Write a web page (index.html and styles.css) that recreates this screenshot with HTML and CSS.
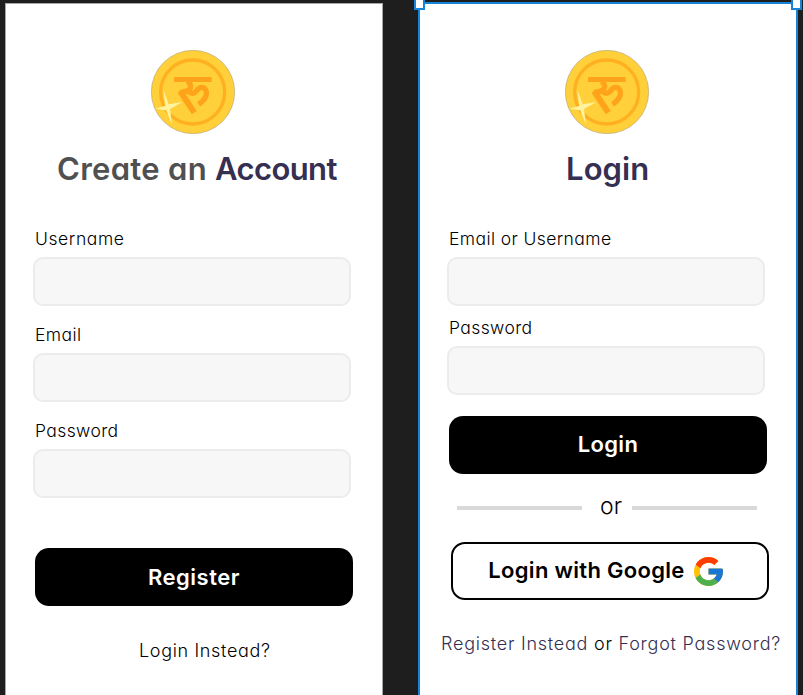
FILE: index.html
```html
<!DOCTYPE html>
<html lang="en">
<head>
<meta charset="utf-8">
<title>Account screens</title>
<link rel="stylesheet" href="styles.css">
</head>
<body>
<svg width="0" height="0" class="defs" aria-hidden="true">
  <symbol id="coin" viewBox="33 30 252 252">
    <circle cx="159" cy="156" r="125" fill="#ffd039" stroke="#b9a878" stroke-width="2"/>
    <circle cx="158" cy="156" r="96" fill="none" stroke="#ffb020" stroke-width="10"/>
    <g fill="none" stroke="#ffa31a">
      <path d="M102 118.500H215" stroke-width="15"/>
      <path d="M142 124C154 132 155 144 145 151Q136 157 119 158" stroke-width="16"/>
      <path d="M120 153L163 218" stroke-width="18"/>
      <path d="M143 153Q158 166 168 154C174 146 178 141 186 142C198 144 202 157 198 168Q192 182 176 193" stroke-width="16"/>
    </g>
    <path d="M70 148L86 193L127 186L90 207L96 255L79 211L45 206L76 198Z" fill="#fff3a0"/>
  </symbol>
</svg>
<main class="board">
  <section class="screen register">
    <svg class="coin"><use href="#coin"/></svg>
    <h1 class="title t-create"><span class="muted">Create an</span> <span class="accent">Account</span></h1>
    <form class="form">
      <label class="field"><span class="l-user">Username</span><input type="text"></label>
      <label class="field"><span>Email</span><input type="text"></label>
      <label class="field"><span>Password</span><input type="password"></label>
      <button class="btn primary b-register" type="button">Register</button>
    </form>
    <p class="links single"><a>Login Instead?</a></p>
  </section>
  <section class="screen login">
    <i class="handle start"></i><i class="handle end"></i>
    <svg class="coin"><use href="#coin"/></svg>
    <h1 class="title t-login">Login</h1>
    <form class="form">
      <label class="field"><span>Email or Username</span><input type="text"></label>
      <label class="field"><span>Password</span><input type="password"></label>
      <button class="btn primary" type="button">Login</button>
      <div class="divider"><hr><span>or</span><hr></div>
      <button class="btn outline" type="button"><span>Login with Google</span>
        <svg class="google" viewBox="4 4 40 40"><path fill="#FFC107" d="M43.611 20.083H42V20H24v8h11.303C33.654 32.657 29.223 36 24 36c-6.627 0-12-5.373-12-12s5.373-12 12-12c3.059 0 5.842 1.154 7.961 3.039l5.657-5.657C34.046 6.053 29.268 4 24 4 12.955 4 4 12.955 4 24s8.955 20 20 20 20-8.955 20-20c0-1.341-.138-2.650-.389-3.917z"/><path fill="#FF3D00" d="M6.306 14.691l6.571 4.819C14.655 15.108 18.961 12 24 12c3.059 0 5.842 1.154 7.961 3.039l5.657-5.657C34.046 6.053 29.268 4 24 4 16.318 4 9.656 8.337 6.306 14.691z"/><path fill="#4CAF50" d="M24 44c5.166 0 9.860-1.977 13.409-5.192l-6.190-5.238C29.211 35.091 26.715 36 24 36c-5.202 0-9.619-3.317-11.283-7.946l-6.522 5.025C9.505 39.556 16.227 44 24 44z"/><path fill="#1976D2" d="M43.611 20.083H42V20H24v8h11.303c-.792 2.237-2.231 4.166-4.087 5.571l6.193 5.238C36.971 39.205 44 34 44 24c0-1.341-.138-2.650-.389-3.917z"/></svg>
      </button>
    </form>
    <p class="links"><a>Register Instead</a> or <a>Forgot Password?</a></p>
  </section>
</main>
</body>
</html>
```

FILE: styles.css
```css
* { box-sizing: border-box; }
body {
  margin: 0;
  height: 695px;
  overflow: hidden;
  background: #1e1e1e;
  color: #000;
  font-family: Inter, "Liberation Sans", sans-serif;
  font-feature-settings: "cv11";
}
.defs { display: block; }
.board {
  display: grid;
  grid-template-columns: 378px 380px;
  column-gap: 35px;
  padding: 3px 0 0 5px;
}
.screen {
  position: relative;
  height: 700px;
  background: #fff;
  display: flex;
  flex-direction: column;
}
.register { border: 1px solid #a6a6a6; border-bottom: 0; padding: 46px 29px 0 27px; }
.login { height: 701px; margin-top: -1px; border: 2px solid #1684d8; border-bottom: 0; padding: 46px 30px 0 27px; }
.handle {
  position: absolute;
  top: -7px;
  width: 11px;
  height: 13px;
  background: #fff;
  border: 2px solid #1684d8;
}
.start { left: -6px; }
.end { right: -6px; }
.coin { width: 84px; height: 84px; margin-left: 118px; flex: none; }
.title {
  margin: 14px 0 0;
  height: 42px;
  line-height: 42px;
  font-size: 31px;
  font-weight: 600;
  color: #352f52;
  white-space: nowrap;
}
.t-create { margin-left: 24px; letter-spacing: .3px; }
.accent { letter-spacing: -.6px; }
.t-login { margin-left: 119px; letter-spacing: .1px; }
.muted { color: #505050; }
.form { display: flex; flex-direction: column; margin-top: 35px; }
.field { display: block; height: 96px; }
.field span {
  display: block;
  height: 32px;
  line-height: 28px;
  padding-left: 2px;
  font-size: 17.500px;
  font-weight: 300;
  letter-spacing: .4px;
  white-space: nowrap;
}
.field .l-user { letter-spacing: .6px; }
.field input {
  display: block;
  width: 318px;
  height: 49px;
  border: 2px solid #ececec;
  border-radius: 10px;
  background: #f7f7f7;
}
.login .field { height: 89px; }
.btn {
  display: flex;
  align-items: center;
  justify-content: center;
  width: 318px;
  height: 58px;
  margin-left: 2px;
  padding: 0 0 2px;
  border: 0;
  border-radius: 14px;
  font: 600 22px/30px Inter, "Liberation Sans", sans-serif;
  font-feature-settings: "cv11";
  letter-spacing: .3px;
}
.primary { background: #000; color: #fff; }
.b-register { margin-top: 35px; padding-bottom: 0; letter-spacing: .5px; }
.login .primary { margin-top: 13px; }
.outline {
  margin: 19px 0 0 4px;
  gap: 9px;
  padding: 0 9px 0 0;
  border: 2px solid #000;
  background: #fff;
  color: #000;
}
.outline span { padding-bottom: 2px; }
.google { width: 29px; height: 29px; }
.divider {
  display: grid;
  grid-template-columns: 125px 50px 125px;
  align-items: center;
  height: 49px;
  margin: 0 0 0 10px;
  padding-top: 18px;
  font-size: 23px;
  font-weight: 350;
  text-align: center;
}
.divider span { padding: 0 0 4px 8px; }
.divider hr { width: 100%; height: 4px; margin: 0; border: 0; background: #d9d9d9; }
.links {
  margin: 29px 0 0 -6px;
  font-size: 18px;
  font-weight: 350;
  line-height: 30px;
  letter-spacing: .76px;
  white-space: nowrap;
}
.login .links a { color: #352f52; }
.links.single { margin: 30px 0 0 106px; letter-spacing: .66px; }
```
